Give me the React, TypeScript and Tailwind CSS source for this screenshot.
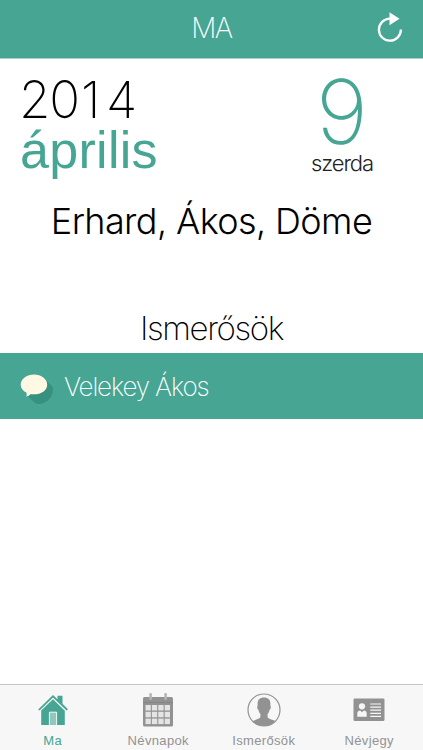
import React from 'react';

interface Tab {
  label: string;
  icon: React.ReactNode;
  active?: boolean;
}

const RefreshIcon = () => (
  <svg width="28" height="32" viewBox="0 0 28 32" fill="none">
    <path d="M14 6.700A11 11 0 1 0 24.900 17.500" stroke="#fff" strokeWidth="2.300" />
    <path d="M13.500 0.300L23.500 6.800L13.500 13.300Z" fill="#fff" />
  </svg>
);

const BubbleIcon = () => (
  <svg className="mt-2" width="34" height="32" viewBox="0 0 34 32">
    <path d="M27.500 7.500L32.700 13C34.500 22 27 29 20 30C17.500 30.300 15.500 29.500 14.500 28.500L7.500 22L20 18Z" fill="#36917f" />
    <path
      d="M14 0.500C21.300 0.500 27.200 5 27.200 10.700S21.300 20.300 14 20.300C12.700 20.300 11.600 20.100 10.500 20C9.500 21.300 8 22.200 6.300 22.600C6.900 21.200 6.700 19.600 6.300 18.600C3 16.900 0.700 14 0.700 10.700C0.700 5 6.700 0.500 14 0.500Z"
      fill="#fff9e4"
    />
  </svg>
);

const HomeIcon = () => (
  <svg width="32" height="32" viewBox="0 0 32 32" fill="#46a593">
    <path d="M1.200 15.500L16 1L20.500 5.200V1.800H25.500V9.800L31 15.300L29.600 16.400L16 3.500L2.600 16.600Z" />
    <path d="M4.200 16.600L16 5.200L27.800 16.800V31H4.200Z" />
    <path d="M12.400 31V18.200H19.600V31" fill="#8fc8bc" stroke="#f7f7f7" strokeWidth="1" />
  </svg>
);

const CalendarIcon = () => (
  <svg width="32" height="34" viewBox="0 0 32 34">
    <rect x="1" y="4" width="30" height="29.500" rx="1.500" fill="#929292" />
    <path d="M1 9.500H31" stroke="#858585" />
    {[12, 18.800, 25.600].map((y) =>
      [3.500, 9.900, 16.300, 22.700].map((x) => (
        <rect key={`${x}-${y}`} x={x} y={y} width="5.300" height="5.500" fill="#e4e4e4" />
      ))
    )}
    <rect x="7.300" y="0" width="2.600" height="7" rx="1" fill="#b5b5b5" />
    <rect x="22.300" y="0" width="2.600" height="7" rx="1" fill="#b5b5b5" />
  </svg>
);

const PersonIcon = () => (
  <svg width="34" height="34" viewBox="0 0 34 34">
    <circle cx="17" cy="17" r="16" fill="#f7f7f7" stroke="#929292" strokeWidth="1.200" />
    <path
      d="M17 4.600C22 4.600 24 7.800 23.300 12.700C24.300 13 23.700 16.300 22.500 16.900C22.100 19 21.300 20.200 20.600 21V24.300C22 26.400 26 26.600 28.500 28.200C25.500 31.400 21.500 33 17 33S8.500 31.400 5.500 28.200C8 26.600 12 26.400 13.400 24.300V21C12.700 20.200 11.900 19 11.500 16.900C10.300 16.300 9.700 13 10.700 12.700C10 7.800 12 4.600 17 4.600Z"
      fill="#929292"
    />
  </svg>
);

const CardIcon = () => (
  <svg width="32" height="24" viewBox="0 0 32 24">
    <rect x="0.500" y="0.500" width="31" height="22.500" rx="1.300" fill="#929292" />
    <circle cx="9" cy="8.300" r="3.100" fill="#f7f7f7" />
    <path d="M4.300 18.800V15.500C4.300 13.500 5.500 12.400 7.200 12.400L9 14.200L10.800 12.400C12.500 12.400 13.700 13.500 13.700 15.500V18.800Z" fill="#f7f7f7" />
    <path d="M17.300 6H28M17.300 9.100H28M17.300 12.200H28M17.300 15.300H28M17.300 18.400H28" stroke="#f7f7f7" strokeWidth="1.200" />
  </svg>
);

const tabs: Tab[] = [
  { label: 'Ma', icon: <HomeIcon />, active: true },
  { label: 'Névnapok', icon: <CalendarIcon /> },
  { label: 'Ismerősök', icon: <PersonIcon /> },
  { label: 'Névjegy', icon: <CardIcon /> }
];

const friends = ['Velekey Ákos'];

export default function App() {
  return (
    <div className="flex h-screen w-full flex-col overflow-hidden bg-white font-['Inter',sans-serif] text-black">
      <header className="grid h-[59px] shrink-0 grid-cols-[1fr_auto_1fr] items-center border-b border-[#a9cfc7] bg-[#46a593] pb-[3px]">
        <span />
        <h1 className="text-[28px] leading-none font-extralight tracking-[-1.5px] text-white">MA</h1>
        <button className="mr-[19px] justify-self-end" aria-label="Frissítés">
          <RefreshIcon />
        </button>
      </header>

      <main className="flex-1">
        <section className="flex justify-between pt-4 pr-[50px] pl-5">
          <div>
            <p className="-ml-px text-[51px] leading-[50px] font-extralight tracking-[-1.2px]">
              20<span className="pr-[7px] pl-0.5">1</span>4
            </p>
            <p className="font-['Liberation_Sans',sans-serif] text-[52px] leading-[50px] tracking-[0.3px] text-[#46a593]">április</p>
          </div>
          <div className="text-center">
            <p className="text-[89px] leading-[73px] font-extralight text-[#46a593]">9</p>
            <p className="text-[22px] leading-[30px] font-light tracking-[-1.1px] text-[#222]">szerda</p>
          </div>
        </section>

        <p className="mt-[18px] text-center text-[36px] leading-[50px] font-light tracking-[-0.6px]">Erhard, Ákos, Döme</p>

        <h2 className="mt-[57px] text-center text-[33px] leading-[50px] font-extralight tracking-[-1.4px]">Ismerősök</h2>
        <ul>
          {friends.map((name) => (
            <li key={name} className="flex h-[66px] items-center bg-[#46a593] pl-5 text-white">
              <BubbleIcon />
              <span className="ml-2.5 text-[26px] font-extralight tracking-[-1.15px]">{name}</span>
            </li>
          ))}
        </ul>
      </main>

      <nav className="grid h-[66px] shrink-0 grid-cols-4 border-t border-[#c4c4c4] bg-[#f7f7f7] pr-px">
        {tabs.map(({ label, icon, active }) => (
          <div
            key={label}
            className={`flex flex-col items-center font-['Liberation_Sans',sans-serif] text-[13px] tracking-[0.35px] ${active ? 'text-[#46a593]' : 'text-[#929292]'}`}
          >
            <span className="flex h-[50px] items-center">{icon}</span>
            <span className="leading-3">{label}</span>
          </div>
        ))}
      </nav>
    </div>
  );
}
